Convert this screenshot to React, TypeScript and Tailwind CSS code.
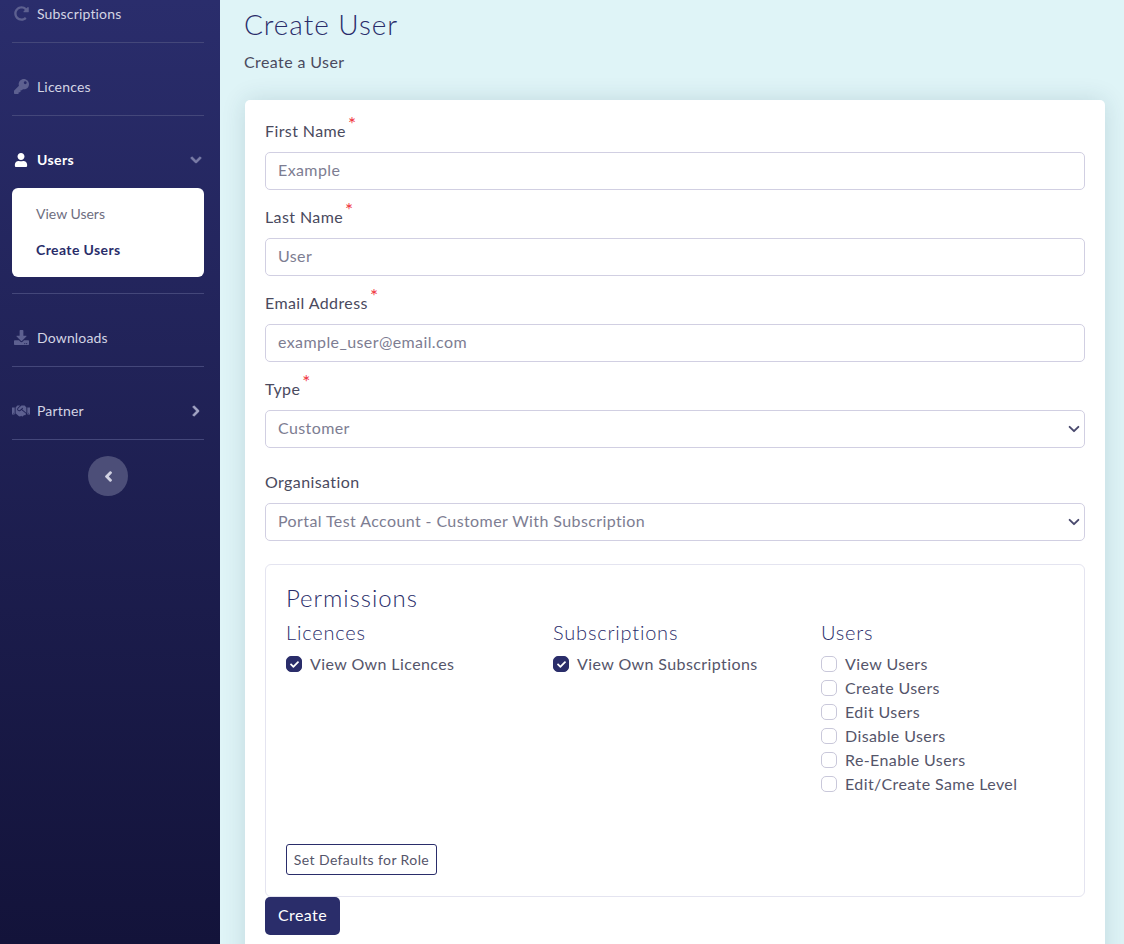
import { FaRedoAlt, FaKey, FaUser, FaChevronDown, FaChevronRight, FaChevronLeft, FaDownload, FaHandshake, FaCheck } from 'react-icons/fa';
import type { ReactNode } from 'react';

const navy = '#2a2d6a';

function NavRow({ icon, label, right }: { icon: ReactNode; label: string; right?: ReactNode }) {
  return (
    <div className="flex h-[72px] items-center pt-[15px]">
      <div className="flex w-[18px] justify-center text-[15px] text-[#5d6090]">{icon}</div>
      <span className="ml-[7px] text-[14px] tracking-[0.012em] text-[#d3d4e4]">{label}</span>
      {right && <div className="ml-auto mr-[2px] text-[12px]">{right}</div>}
    </div>
  );
}

function Divider() {
  return <div className="h-px bg-[#44477a]" />;
}

function Sidebar() {
  return (
    <aside className="h-full w-[220px] shrink-0 overflow-hidden bg-gradient-to-b from-[#2a2d6c] to-[#13133a] pl-[12px] pr-[16px]">
      <div className="-mt-[30px]">
        <NavRow icon={<FaRedoAlt />} label="Subscriptions" />
        <Divider />
        <NavRow icon={<FaKey />} label="Licences" />
        <Divider />
        <div className="flex h-[72px] items-center pt-[15px]">
          <div className="flex w-[18px] justify-center text-[14px] text-white"><FaUser /></div>
          <span className="ml-[7px] text-[14px] font-bold text-white">Users</span>
          <div className="ml-auto mr-[2px] text-[12px] text-[#7a7ca6]"><FaChevronDown className="[stroke-width:40]" /></div>
        </div>
        <div className="h-[89px] rounded-[6px] bg-white pl-[24px] pt-[16px] text-[14px]">
          <div className="leading-[20px] tracking-normal text-[#6e6e80]">View Users</div>
          <div className="mt-[16px] font-bold leading-[20px] text-[#2a2d6a]">Create Users</div>
        </div>
        <div className="h-[16px]" />
        <Divider />
        <NavRow icon={<FaDownload />} label="Downloads" />
        <Divider />
        <NavRow icon={<FaHandshake className="text-[18px]" />} label="Partner" right={<FaChevronRight className="text-[#a3a5c4] [stroke-width:40]" />} />
        <Divider />
        <div className="mt-[16px] flex justify-center">
          <button className="flex h-[40px] w-[40px] items-center justify-center rounded-full bg-[#4c4e78] text-[11px] text-[#d3d4e4]">
            <FaChevronLeft className="[stroke-width:50]" />
          </button>
        </div>
      </div>
    </aside>
  );
}

function Label({ text, required }: { text: string; required?: boolean }) {
  return (
    <div className="mb-[8px] h-[24px] text-[16px] leading-[22px] text-[#4a4a5e]">
      {text}
      {required && <span className="relative -top-[6px] ml-[2px] text-[19px] leading-none text-[#f0323c]">*</span>}
    </div>
  );
}

function TextField({ label, placeholder }: { label: string; placeholder: string }) {
  return (
    <div className="mb-[16px]">
      <Label text={label} required />
      <input
        placeholder={placeholder}
        className="block h-[38px] w-full rounded-[5px] border border-[#d1cfe2] bg-white px-[12px] pb-[3px] text-[16px] outline-none placeholder:text-[#7d7d92]"
      />
    </div>
  );
}

function SelectBox({ value }: { value: string }) {
  return (
    <div className="relative">
      <select className="block h-[38px] w-full appearance-none rounded-[5px] border border-[#d1cfe2] bg-white px-[12px] pb-[2px] text-[16px] text-[#7d7d92] outline-none">
        <option>{value}</option>
      </select>
      <svg viewBox="0 0 16 16" className="pointer-events-none absolute right-[4px] top-[12px] h-[14px] w-[14px]" fill="none" stroke="#4a4a6e" strokeWidth="2.2" strokeLinecap="round" strokeLinejoin="round">
        <path d="M3 5.500l5 5 5-5" />
      </svg>
    </div>
  );
}

function Check({ label, checked }: { label: string; checked?: boolean }) {
  return (
    <div className="flex h-[24px] items-center">
      <span className={`flex h-[16px] w-[16px] items-center justify-center rounded-[5px] border ${checked ? 'border-[#2a2d6a] bg-[#2a2d6a]' : 'border-[#c9c8da] bg-white'}`}>
        {checked && <FaCheck className="text-[9px] text-white" />}
      </span>
      <span className="ml-[8px] text-[16px] text-[#55556a]">{label}</span>
    </div>
  );
}

function PermColumn({ title, items }: { title: string; items: { label: string; checked?: boolean }[] }) {
  return (
    <div>
      <div className="mb-[8px] h-[24px] text-[20px] font-light leading-[24px] tracking-[0.04em] text-[#2a2d6a]">{title}</div>
      {items.map((i) => (
        <Check key={i.label} label={i.label} checked={i.checked} />
      ))}
    </div>
  );
}

export default function App() {
  return (
    <div
      className="flex h-[944px] w-[1124px] overflow-hidden bg-[#dff4f7] tracking-[0.025em]"
      style={{ fontFamily: 'Lato, "Noto Sans", sans-serif' }}
    >
      <Sidebar />
      <main className="min-w-0 flex-1 px-[25px]">
        <h1 className="ml-[-1px] mt-[6px] h-[36px] text-[28px] font-light leading-[36px] tracking-[0.034em] text-[#2a2d6a]">Create User</h1>
        <p className="ml-[-1px] mt-[8px] h-[24px] text-[16px] leading-[24px] text-[#4a4a5e]">Create a User</p>
        <div className="mt-[26px] h-[900px] w-[860px] rounded-[5px] bg-white px-[20px] pt-[20px] shadow-[0_0_24px_rgba(0,60,80,0.14)]">
          <TextField label="First Name" placeholder="Example" />
          <TextField label="Last Name" placeholder="User" />
          <TextField label="Email Address" placeholder="example_user@email.com" />
          <div className="mb-[23px]">
            <Label text="Type" required />
            <SelectBox value="Customer" />
          </div>
          <div className="mb-[23px]">
            <Label text="Organisation" />
            <SelectBox value="Portal Test Account - Customer With Subscription" />
          </div>
          <div className="h-[333px] rounded-[6px] border border-[#e4e4f0] px-[20px] pt-[19px]">
            <div className="mb-[8px] h-[28px] text-[24px] font-light leading-[28px] tracking-[0.04em] text-[#2a2d6a]">Permissions</div>
            <div className="grid grid-cols-[267px_268px_1fr]">
              <PermColumn title="Licences" items={[{ label: 'View Own Licences', checked: true }]} />
              <PermColumn title="Subscriptions" items={[{ label: 'View Own Subscriptions', checked: true }]} />
              <PermColumn
                title="Users"
                items={[
                  { label: 'View Users' },
                  { label: 'Create Users' },
                  { label: 'Edit Users' },
                  { label: 'Disable Users' },
                  { label: 'Re-Enable Users' },
                  { label: 'Edit/Create Same Level' },
                ]}
              />
            </div>
            <button className="mt-[48px] h-[31px] w-[151px] rounded-[3px] border border-[#2a2d6a] bg-white pb-[1px] text-[14px] text-[#55556a]">
              Set Defaults for Role
            </button>
          </div>
          <button className="h-[38px] w-[75px] rounded-[5px] pb-[2px] text-[16px] text-white" style={{ backgroundColor: navy }}>
            Create
          </button>
        </div>
      </main>
    </div>
  );
}
